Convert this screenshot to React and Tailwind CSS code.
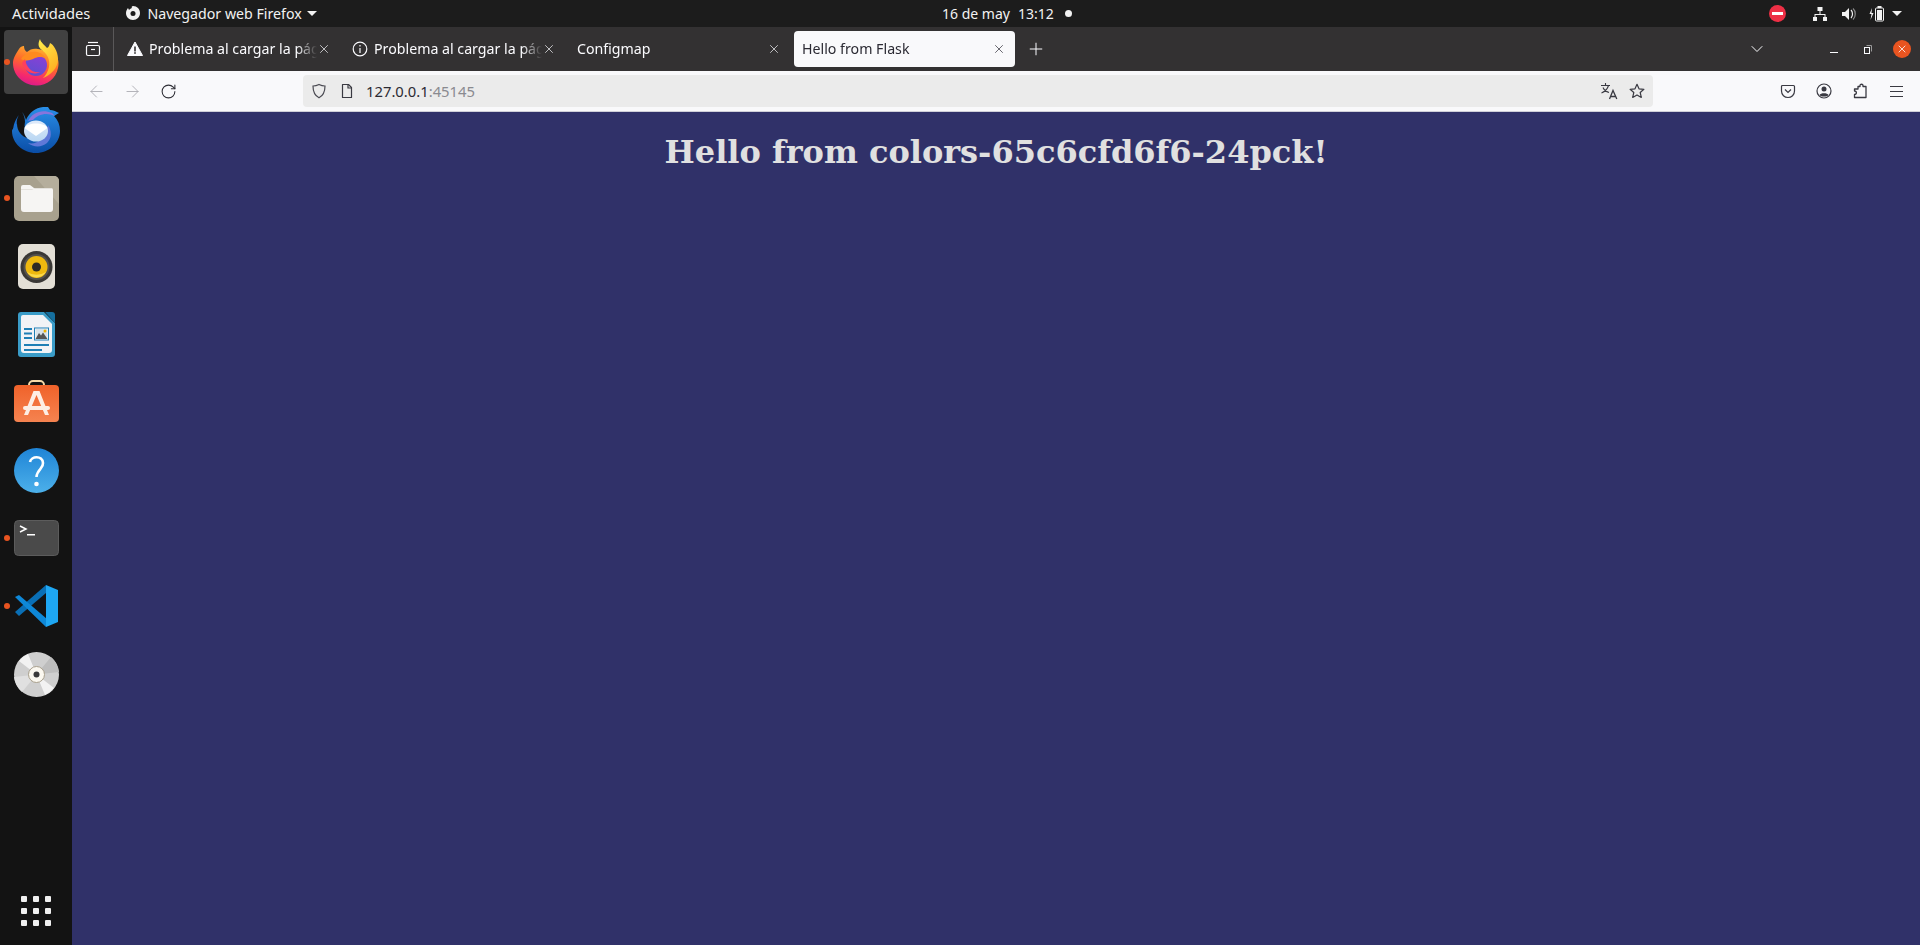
import { ArrowLeft, ArrowRight, RotateCw, X, Plus, ChevronDown } from 'lucide-react';

const uiFont = "font-['Noto_Sans',sans-serif]";

function FirefoxLogo() {
  return (
    <svg viewBox="0 0 46 48" className="w-[46px] h-[48px]">
      <defs>
        <linearGradient id="ffBody" x1="0.7" y1="0" x2="0.35" y2="1">
          <stop offset="0" stopColor="#ffbd2e" />
          <stop offset="0.45" stopColor="#ff6a2b" />
          <stop offset="0.8" stopColor="#f5296d" />
          <stop offset="1" stopColor="#d91a8c" />
        </linearGradient>
        <linearGradient id="ffFlame" x1="0.3" y1="0" x2="0.8" y2="1">
          <stop offset="0" stopColor="#ffe747" />
          <stop offset="1" stopColor="#ffa71c" />
        </linearGradient>
        <linearGradient id="ffGlobe" x1="0.7" y1="0" x2="0.3" y2="1">
          <stop offset="0" stopColor="#8c3fd6" />
          <stop offset="1" stopColor="#5b4fd0" />
        </linearGradient>
      </defs>
      <path d="M6 11 C8 8 10 8 11 8 C11 11 12 13 14 14 C17 11 21 10 25 11 C33 12 40 19 42 15 C46 21 46 26 45 30 C43 41 33 48 23 47.500 C10 47 0 37 0 25 C0 20 3 16 6 11Z" fill="url(#ffBody)" />
      <path d="M27 1 C24 7 26 10 30 13 C35 17 37 22 36 29 C35 34 32 38 30 40 C38 37 45 30 45 21 C45 13 40 6 37 5 C36 8 36 9 34 10 C32 7 28 5 27 1Z" fill="url(#ffFlame)" />
      <circle cx="23" cy="27" r="11" fill="url(#ffGlobe)" />
      <path d="M8 21 C12 15 20 12 27 15 C31 17 33 20 33 21 C29 18 25 19 22 20 C18 22 13 24 8 21Z" fill="#ff8a1f" />
      <path d="M12 21 C13 29 19 36 28 34 C20 38 11 33 9 25Z" fill="#ff3f5d" />
    </svg>
  );
}

function ThunderbirdLogo() {
  return (
    <svg viewBox="0 0 48 46" className="w-[48px] h-[46px]">
      <defs>
        <linearGradient id="tbBody" x1="0.5" y1="0" x2="0.5" y2="1">
          <stop offset="0" stopColor="#2a8fe8" />
          <stop offset="1" stopColor="#0a4da6" />
        </linearGradient>
        <linearGradient id="tbMail" x1="0.5" y1="0" x2="0.5" y2="1">
          <stop offset="0" stopColor="#dfeafa" />
          <stop offset="1" stopColor="#b8d6f2" />
        </linearGradient>
      </defs>
      <path d="M10 5 C12 8 13 11 13 15 C12 20 13 26 16 31 C10 30 5 24 5 17 C3 20 0 22 0 24 C0 36 11 46 24 46 C37 46 48 36 48 24 C48 18 46 13 42 9 L47 6 C43 4 41 3 38 3 L36 0 C26 -1 18 4 14 13 C13 10 12 7 10 5Z" fill="url(#tbBody)" />
      <path d="M10 5 C6 8 4 13 5 18 C3 20 1 22 1 25 C1 19 3 11 10 5Z" fill="#1a6fd0" />
      <path d="M16 14 C21 5 30 2 40 6 L43 9 C35 5 26 7 21 13 C19 13 17 14 16 14Z" fill="#8775dc" />
      <path d="M36 18 C40 24 40 31 35 36 C29 41 21 40 16 36 C24 38 33 33 36 18Z" fill="#5f78d8" />
      <ellipse cx="24" cy="24" rx="12" ry="10.500" fill="url(#tbMail)" />
      <path d="M12.500 21 L24 29 L35.500 21 C33 15 15 15 12.500 21Z" fill="#ffffff" />
    </svg>
  );
}

function FilesIcon() {
  return (
    <svg viewBox="0 0 45 45" className="w-[45px] h-[45px]">
      <rect x="0" y="0" width="45" height="45" rx="5" fill="#a8a18e" />
      <path d="M20 0 H40 a5 5 0 0 1 5 5 V28Z" fill="#b5ae9c" />
      <path d="M7 11 a2 2 0 0 1 2 -2 H16 L20 12 H37 a2 2 0 0 1 2 2 V33 a3 3 0 0 1 -3 3 H10 a3 3 0 0 1 -3 -3Z" fill="#f6f5f3" />
      <path d="M7 14 H18 L21 12 H38 V13 H7Z" fill="#e4e2dd" />
    </svg>
  );
}

function RhythmboxIcon() {
  return (
    <svg viewBox="0 0 37 45" className="w-[37px] h-[45px]">
      <rect width="37" height="45" rx="5" fill="#e3dfd6" />
      <circle cx="18.500" cy="23" r="16" fill="#3a3836" />
      <circle cx="18.500" cy="23" r="13" fill="#55524e" />
      <circle cx="18.500" cy="23" r="11" fill="#eeb80f" />
      <path d="M9 28 A11 11 0 0 0 28 28 A14 10 0 0 1 9 28Z" fill="#fbd94a" />
      <circle cx="18.500" cy="23" r="4.500" fill="#2d2a26" />
    </svg>
  );
}

function WriterIcon() {
  return (
    <svg viewBox="0 0 37 45" className="w-[37px] h-[45px]">
      <path d="M3 0 H26 L37 11 V42 a3 3 0 0 1 -3 3 H3 a3 3 0 0 1 -3 -3 V3 a3 3 0 0 1 3 -3Z" fill="#3a9cc8" />
      <path d="M5 3 H25 L34 12 V38 a3 3 0 0 1 -3 3 H6 a3 3 0 0 1 -3 -3 V5 a2 2 0 0 1 2 -2Z" fill="#f2f3f6" />
      <path d="M27 0 H34 a3 3 0 0 1 3 3 V11Z" fill="#156f9e" />
      <g fill="#1f7fb5">
        <rect x="6" y="16" width="8" height="2" />
        <rect x="6" y="20.500" width="8" height="2" />
        <rect x="6" y="25" width="8" height="2" />
        <rect x="6" y="32" width="25" height="2" />
        <rect x="6" y="37" width="18" height="2" />
      </g>
      <rect x="16.500" y="16" width="14" height="12" fill="#fff" stroke="#1f7fb5" />
      <rect x="17.500" y="17" width="12" height="10" fill="#d8e3ea" />
      <path d="M17.500 27 L21 21 L23 23.500 L25 20.500 L29.500 27Z" fill="#555" />
      <circle cx="27" cy="19" r="1.500" fill="#f0b400" />
    </svg>
  );
}

function SoftwareIcon() {
  return (
    <svg viewBox="0 0 45 44" className="w-[45px] h-[44px] -mt-[3px]">
      <defs>
        <linearGradient id="swBag" x1="0.5" y1="0" x2="0.5" y2="1">
          <stop offset="0" stopColor="#f0622a" />
          <stop offset="1" stopColor="#f58350" />
        </linearGradient>
      </defs>
      <path d="M15 9 V6 a4 4 0 0 1 4 -4 H26 a4 4 0 0 1 4 4 V9" fill="none" stroke="#f6d9a8" strokeWidth="2" />
      <rect y="6" width="45" height="37" rx="4" fill="url(#swBag)" />
      <path d="M19.500 12 H25.500 L35 36 H31 L22.500 16 L14 36 H10Z" fill="#fdeee4" />
      <rect x="9" y="27" width="27" height="4" rx="2" fill="#fdeee4" />
    </svg>
  );
}

function HelpIcon() {
  return (
    <svg viewBox="0 0 45 45" className="w-[45px] h-[45px]">
      <defs>
        <linearGradient id="hlp" x1="0.5" y1="0" x2="0.5" y2="1">
          <stop offset="0" stopColor="#1f84d6" />
          <stop offset="1" stopColor="#4cb0ea" />
        </linearGradient>
      </defs>
      <circle cx="22.500" cy="22.500" r="22.500" fill="url(#hlp)" />
      <path d="M16 14 C17 8 28.500 7 29 15 C29.500 21 23 21 22.500 29" fill="none" stroke="#fff" strokeWidth="2.600" />
      <circle cx="22.500" cy="36" r="2.300" fill="#fff" />
    </svg>
  );
}

function TerminalIcon() {
  return (
    <svg viewBox="0 0 45 36" className="w-[45px] h-[36px]">
      <rect x="0.500" y="0.500" width="44" height="35" rx="4" fill="#4a4a4a" stroke="#5c5c5c" />
      <path d="M6 6 L12 9 L6 12" fill="none" stroke="#fff" strokeWidth="1.500" />
      <rect x="13" y="14" width="8" height="1.500" fill="#fff" />
    </svg>
  );
}

function VSCodeIcon() {
  return (
    <svg viewBox="0 0 43 42" className="w-[43px] h-[42px]">
      <path d="M0 27 L4 31 L31 8 V0Z" fill="#0a6fb5" />
      <path d="M0 12 L4 10 L32 34 L31 42Z" fill="#0e88d8" />
      <path d="M31 0 L43 5 V37 L31 42Z" fill="#1ea7f3" />
    </svg>
  );
}

function DiscIcon() {
  return (
    <svg viewBox="0 0 45 45" className="w-[45px] h-[45px]">
      <circle cx="22.500" cy="22.500" r="22.500" fill="#cfcfcf" />
      <path d="M22.500 22.500 L5 9 A22.500 22.500 0 0 1 14 2Z" fill="#f2f2f2" />
      <path d="M22.500 22.500 L40 36 A22.500 22.500 0 0 1 31 43Z" fill="#f2f2f2" />
      <path d="M22.500 22.500 L0 25 A22.500 22.500 0 0 0 8 40Z" fill="#e0e0e0" />
      <path d="M22.500 22.500 L45 20 A22.500 22.500 0 0 0 37 5Z" fill="#bdbdbd" />
      <circle cx="22.500" cy="22.500" r="8" fill="#fbf8f0" stroke="#a89f8c" />
      <circle cx="22.500" cy="22.500" r="3" fill="#3a3a3a" />
    </svg>
  );
}

function DockItem({ running, active, children }) {
  return (
    <div className="relative h-[68px] flex items-center justify-center">
      {running && <span className="absolute left-[4px] top-1/2 -mt-[3px] w-[6px] h-[6px] rounded-full bg-[#e95420]" />}
      <div className={`w-[64px] h-[64px] flex items-center justify-center rounded-[4px] ${active ? 'bg-[#414141]' : ''}`}>
        {children}
      </div>
    </div>
  );
}

function Dock() {
  return (
    <aside className="w-[72px] shrink-0 bg-[#131313] flex flex-col pt-px">
      <DockItem running active><FirefoxLogo /></DockItem>
      <DockItem><ThunderbirdLogo /></DockItem>
      <DockItem running><FilesIcon /></DockItem>
      <DockItem><RhythmboxIcon /></DockItem>
      <DockItem><WriterIcon /></DockItem>
      <DockItem><SoftwareIcon /></DockItem>
      <DockItem><HelpIcon /></DockItem>
      <DockItem running><TerminalIcon /></DockItem>
      <DockItem running><VSCodeIcon /></DockItem>
      <DockItem><DiscIcon /></DockItem>
      <div className="mt-auto mb-[19px] mx-auto grid grid-cols-3 gap-[6px]">
        {[...Array(9).keys()].map((i) => (
          <span key={i} className="w-[6px] h-[6px] rounded-[1px] bg-[#f0f0f0]" />
        ))}
      </div>
    </aside>
  );
}

function TopBar() {
  return (
    <header className={`h-[27px] shrink-0 bg-[#1c1c1c] flex items-center text-[#f2f2f2] text-[14px] ${uiFont}`}>
      <div className="w-[942px] shrink-0 flex items-center pl-3">
        <span className="text-[14.7px]">Actividades</span>
        <svg viewBox="0 0 16 16" className="w-[16px] h-[16px] ml-[35px]">
          <path d="M8 1 C12 1 15 4 15 8 C15 12 12 15 8 15 C4 15 1 12 1 8 C1 6 2 4 3 3 L4 5 C5 4 6 3 7 3 C6 2 7 1 8 1Z" fill="#f2f2f2" />
          <circle cx="8" cy="8.500" r="2.500" fill="#1c1c1c" />
        </svg>
        <span className="ml-[6px] text-[14.2px]">Navegador web Firefox</span>
        <span className="ml-[5px] w-0 h-0 border-x-[5px] border-x-transparent border-t-[5px] border-t-[#f2f2f2]" />
      </div>
      <span>16 de may</span>
      <span className="ml-2">13:12</span>
      <span className="ml-[11px] w-[7px] h-[7px] rounded-full bg-[#f2f2f2]" />
      <div className="ml-auto flex items-center pr-[18px]">
        <span className="w-[17px] h-[17px] rounded-full bg-[#ed2f45] flex items-center justify-center">
          <span className="w-[11px] h-[3px] bg-white" />
        </span>
        <svg viewBox="0 0 16 16" className="w-[16px] h-[16px] ml-[26px]" fill="#f2f2f2">
          <rect x="5.500" y="1" width="5" height="4" />
          <rect x="1" y="11" width="4" height="4" />
          <rect x="11" y="11" width="4" height="4" />
          <path d="M7.500 5 H8.500 V8 H13.500 V11 H12.500 V9 H3.500 V11 H2.500 V8 H7.500Z" />
        </svg>
        <svg viewBox="0 0 16 16" className="w-[16px] h-[16px] ml-[13px]">
          <path d="M1 6 H4 L8 2 V14 L4 10 H1Z" fill="#f2f2f2" />
          <path d="M10 4 C12 6 12 10 10 12" fill="none" stroke="#f2f2f2" strokeWidth="1.200" />
          <path d="M12 2.500 C15 5 15 11 12 13.500" fill="none" stroke="#8a8a8a" strokeWidth="1.200" />
        </svg>
        <svg viewBox="0 0 16 18" className="w-[16px] h-[18px] ml-[12px]">
          <path d="M3 3 L0.500 9 H2.500 L1.500 15 L4.500 8 H2.500Z" fill="#f2f2f2" />
          <rect x="6.500" y="3" width="8" height="13" rx="1" fill="none" stroke="#f2f2f2" />
          <rect x="8.500" y="1" width="4" height="2" fill="#f2f2f2" />
          <rect x="8" y="5" width="5" height="10" fill="#f2f2f2" />
        </svg>
        <span className="ml-[7px] w-0 h-0 border-x-[5px] border-x-transparent border-t-[5px] border-t-[#f2f2f2]" />
      </div>
    </header>
  );
}

function Tab({ icon, title, active }) {
  return (
    <div className={`w-[221px] h-[36px] shrink-0 flex items-center pl-2 pr-[9px] rounded-[4px] ${active ? 'bg-[#f9f9fb] text-[#2b2a33]' : 'text-[#fbfbfe]'}`}>
      {icon && <span className="w-4 h-4 mr-[6px] shrink-0">{icon}</span>}
      <span className="flex-1 min-w-0 overflow-hidden whitespace-nowrap text-[14.2px] [mask-image:linear-gradient(to_right,black_88%,transparent)]">{title}</span>
      <X size={14} strokeWidth={1.2} className="shrink-0" />
    </div>
  );
}

function TabBar() {
  return (
    <div className={`h-[44px] shrink-0 bg-[#333132] flex items-center ${uiFont}`}>
      <div className="w-[42px] h-full shrink-0 flex items-center justify-center border-r border-[#5a5859]">
        <svg viewBox="0 0 16 16" className="w-[16px] h-[16px]" fill="none" stroke="#fbfbfe" strokeWidth="1.200">
          <rect x="1.500" y="4.500" width="13" height="10" rx="1.500" />
          <path d="M3 1.500 H13" />
          <path d="M6 8.500 H10" />
        </svg>
      </div>
      <div className="flex gap-1 ml-[5px]">
        <Tab
          title="Problema al cargar la página"
          icon={
            <svg viewBox="0 0 16 16" className="w-4 h-4">
              <path d="M8 1 L15.500 14.500 H0.500Z" fill="#fbfbfe" stroke="#fbfbfe" strokeLinejoin="round" />
              <rect x="7.200" y="5.500" width="1.600" height="5" fill="#333132" />
              <rect x="7.200" y="11.200" width="1.600" height="1.600" fill="#333132" />
            </svg>
          }
        />
        <Tab
          title="Problema al cargar la página"
          icon={
            <svg viewBox="0 0 16 16" className="w-4 h-4" fill="none" stroke="#fbfbfe" strokeWidth="1.200">
              <circle cx="8" cy="8" r="6.800" />
              <path d="M8 7 V12" />
              <path d="M8 4 V5.500" />
            </svg>
          }
        />
        <Tab title="Configmap" />
        <Tab title="Hello from Flask" active />
      </div>
      <Plus size={20} strokeWidth={1.2} className="text-[#fbfbfe] ml-[11px]" />
      <ChevronDown size={20} strokeWidth={1.2} className="text-[#fbfbfe] ml-[701px]" />
      <div className="ml-[59px] w-4 flex justify-center"><span className="block w-[8px] h-px bg-[#fbfbfe] mt-[6px]" /></div>
      <svg viewBox="0 0 16 16" className="w-4 h-4 ml-[18px]" fill="none" stroke="#fbfbfe">
        <rect x="4.500" y="6.500" width="5" height="6" />
        <path d="M6.500 4.500 H11.500 V10.500" stroke="#9a9a9a" />
      </svg>
      <div className="ml-[17px] w-[18px] h-[18px] rounded-full bg-[#e95420] flex items-center justify-center">
        <X size={12} strokeWidth={1.6} className="text-white" />
      </div>
    </div>
  );
}

function ToolBar() {
  const iconCls = 'w-5 h-5 flex items-center justify-center text-[#5b5b66]';
  return (
    <div className={`h-[41px] shrink-0 bg-[#f9f9fb] border-b border-[#cfcfd8] flex items-center pl-[14px] ${uiFont}`}>
      <div className="flex gap-4 items-center">
        <div className={iconCls}><ArrowLeft size={19} strokeWidth={1.1} className="text-[#a9a9af]" /></div>
        <div className={iconCls}><ArrowRight size={19} strokeWidth={1.1} className="text-[#a9a9af]" /></div>
        <div className={iconCls}><RotateCw size={17} strokeWidth={1.5} className="text-[#2f2f36]" /></div>
      </div>
      <div className="ml-[125px] w-[1350px] h-[32px] bg-[#ebebeb] rounded-[4px] flex items-center px-2">
        <svg viewBox="0 0 16 16" className="w-4 h-4" fill="none" stroke="#4a4a52" strokeWidth="1.200">
          <path d="M8 1.500 C10 2.500 12 3 14 3 C14 9 12.500 12.500 8 14.800 C3.500 12.500 2 9 2 3 C4 3 6 2.500 8 1.500Z" />
        </svg>
        <svg viewBox="0 0 16 16" className="w-4 h-4 ml-3" fill="none" stroke="#3a3a42" strokeWidth="1.200">
          <path d="M3.500 1.500 H9.500 L12.500 4.500 V14.500 H3.500Z" strokeLinejoin="round" />
          <path d="M9 1.500 V5 H12.500" />
        </svg>
        <span className="ml-[11px] text-[14.8px] text-[#2b2a33]">127.0.0.1<span className="text-[#8a8a90]">:45145</span></span>
        <svg viewBox="0 0 18 18" className="w-[18px] h-[18px] ml-auto" fill="none" stroke="#3a3a42" strokeWidth="1.100">
          <path d="M1 3.500 H10 M5.500 1 V3.500 M8.500 3.500 C7.500 7 5 9.500 1.500 11 M3 5.500 C4 8 6 9.500 9 10.500" />
          <path d="M9.500 17 L13 8.500 L16.800 17 M10.800 14.500 H15.500" strokeWidth="1.300" />
        </svg>
        <svg viewBox="0 0 16 16" className="w-4 h-4 ml-[11px]" fill="none" stroke="#3a3a42" strokeWidth="1.200">
          <path d="M8 1.300 L10 5.800 L14.900 6.300 L11.200 9.500 L12.300 14.400 L8 11.900 L3.700 14.400 L4.800 9.500 L1.100 6.300 L6 5.800Z" strokeLinejoin="round" />
        </svg>
      </div>
      <div className="ml-[125px] flex gap-4 items-center text-[#3a3a42]">
        <div className="w-5 h-5 flex items-center justify-center">
          <svg viewBox="0 0 16 16" className="w-4 h-4" fill="none" stroke="currentColor" strokeWidth="1.200">
            <path d="M2.500 2.500 H13.500 a1 1 0 0 1 1 1 V8 C14.500 12 11.500 14.500 8 14.500 C4.500 14.500 1.500 12 1.500 8 V3.500 a1 1 0 0 1 1 -1Z" />
            <path d="M5 6.500 L8 9.500 L11 6.500" />
          </svg>
        </div>
        <div className="w-5 h-5 flex items-center justify-center">
          <svg viewBox="0 0 16 16" className="w-4 h-4">
            <circle cx="8" cy="8" r="7" fill="none" stroke="currentColor" strokeWidth="1.200" />
            <circle cx="8" cy="6" r="2.500" fill="currentColor" />
            <path d="M3.500 12 C4.500 9.500 11.500 9.500 12.500 12 C11 14 5 14 3.500 12Z" fill="currentColor" />
          </svg>
        </div>
        <div className="w-5 h-5 flex items-center justify-center">
          <svg viewBox="0 0 16 16" className="w-4 h-4" fill="none" stroke="currentColor" strokeWidth="1.300">
            <path d="M6 3.500 H8 V2.500 C8 0.800 11 0.800 11 2.500 V3.500 H14 V14.500 H2.500 V11.500 C5 11.500 5 8 2.500 8 V6 H6Z" strokeLinejoin="round" />
          </svg>
        </div>
        <div className="w-5 h-5 flex flex-col items-center justify-center gap-[4px]">
          <span className="w-[13px] h-px bg-current" />
          <span className="w-[13px] h-px bg-current" />
          <span className="w-[13px] h-px bg-current" />
        </div>
      </div>
    </div>
  );
}

export default function App() {
  return (
    <div className="w-[1920px] h-[945px] flex flex-col overflow-hidden">
      <TopBar />
      <div className="flex flex-1 min-h-0">
        <Dock />
        <div className="flex-1 min-w-0 flex flex-col">
          <TabBar />
          <ToolBar />
          <main className="flex-1 bg-[#303169]">
            <h1 className="mt-[22px] text-center text-[32px] font-bold leading-[37px] text-[#e0e0e0] font-['DejaVu_Serif',serif]">
              Hello from colors-65c6cfd6f6-24pck!
            </h1>
          </main>
        </div>
      </div>
    </div>
  );
}
